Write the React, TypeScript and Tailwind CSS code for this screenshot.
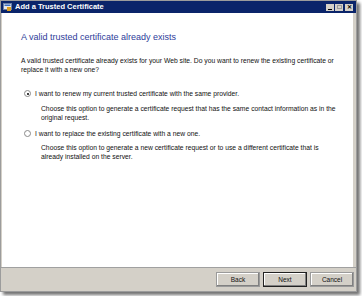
import React from 'react'

const Radio = ({ checked }: { checked?: boolean }) => (
  <span className="relative mt-[1px] h-[7px] w-[7px] shrink-0 rounded-full border border-[#8a8a8a] bg-white">
    {checked && <span className="absolute left-[1.5px] top-[1.5px] h-[2px] w-[2px] rounded-full bg-black" />}
  </span>
)

const Btn = ({ label, active }: { label: string; active?: boolean }) => (
  <button
    className={`flex h-[15px] w-[44px] items-center justify-center bg-[#d4d0c8] text-[6.5px] text-[#111] shadow-[inset_-1px_-1px_0_#808080,inset_1px_1px_0_#fff] ${
      active ? 'border border-[#222]' : 'border border-[#9a9a9a]'
    }`}
  >
    {label}
  </button>
)

const App = () => {
  return (
    <div className="h-[296px] w-[362px] bg-white" style={{ fontFamily: '"Liberation Sans", Arial, sans-serif' }}>
      <div className="flex h-[292px] w-[357px] flex-col border border-[#9c9c9c] bg-[#d4d0c8] shadow-[3px_3px_3px_rgba(0,0,0,0.55)]">
        {/* title bar */}
        <div className="flex h-[12px] items-center justify-between bg-[#0a246a] pl-[2px] pr-[3px]">
          <div className="flex items-center gap-[3px]">
            <svg width="9" height="8" viewBox="0 0 9 8">
              <rect x="0.5" y="0.5" width="8" height="6" fill="#e8e8e8" stroke="#6a7ea8" />
              <rect x="1.5" y="1.5" width="6" height="1.5" fill="#3b6fc4" />
              <rect x="4" y="4" width="4" height="4" fill="#e0a020" />
            </svg>
            <span className="text-[7.5px] font-bold leading-none text-white">Add a Trusted Certificate</span>
          </div>
          <div className="flex gap-[1px]">
            <span className="flex h-[7px] w-[8px] items-end justify-center bg-[#d4d0c8] pb-[1px]">
              <span className="h-[1px] w-[4px] bg-black" />
            </span>
            <span className="flex h-[7px] w-[8px] items-center justify-center bg-[#d4d0c8]">
              <span className="h-[4px] w-[5px] border border-[#9a9a9a]" />
            </span>
            <span className="ml-[1px] flex h-[7px] w-[8px] items-center justify-center bg-[#d4d0c8] text-[6px] font-bold leading-none text-black">
              ✕
            </span>
          </div>
        </div>

        {/* body */}
        <div className="mx-[1px] mr-[3px] flex-1 bg-white pl-[19px] pr-[4px] pt-[18px] text-[6.75px] leading-[9px] text-[#111]">
          <h1 className="text-[9px] leading-[12px] text-[#2e3c9a]">A valid trusted certificate already exists</h1>
          <p className="mt-[13px] whitespace-nowrap">
            A valid trusted certificate already exists for your Web site. Do you want to renew the existing certificate or
            <br />
            replace it with a new one?
          </p>

          <div className="mt-[15px] flex items-start gap-[4px] pl-[3px]">
            <Radio checked />
            <span>I want to renew my current trusted certificate with the same provider.</span>
          </div>
          <p className="mt-[6px] whitespace-nowrap pl-[20px]">
            Choose this option to generate a certificate request that has the same contact information as in the
            <br />
            original request.
          </p>

          <div className="mt-[7px] flex items-start gap-[4px] pl-[3px]">
            <Radio />
            <span>I want to replace the existing certificate with a new one.</span>
          </div>
          <p className="mt-[5px] whitespace-nowrap pl-[20px]">
            Choose this option to generate a new certificate request or to use a different certificate that is
            <br />
            already installed on the server.
          </p>
        </div>

        {/* footer */}
        <div className="flex h-[24px] items-center justify-end gap-[3px] border-t border-[#a0a0a0] pr-[2px]">
          <Btn label="Back" />
          <Btn label="Next" active />
          <Btn label="Cancel" />
        </div>
      </div>
    </div>
  )
}

export default App
